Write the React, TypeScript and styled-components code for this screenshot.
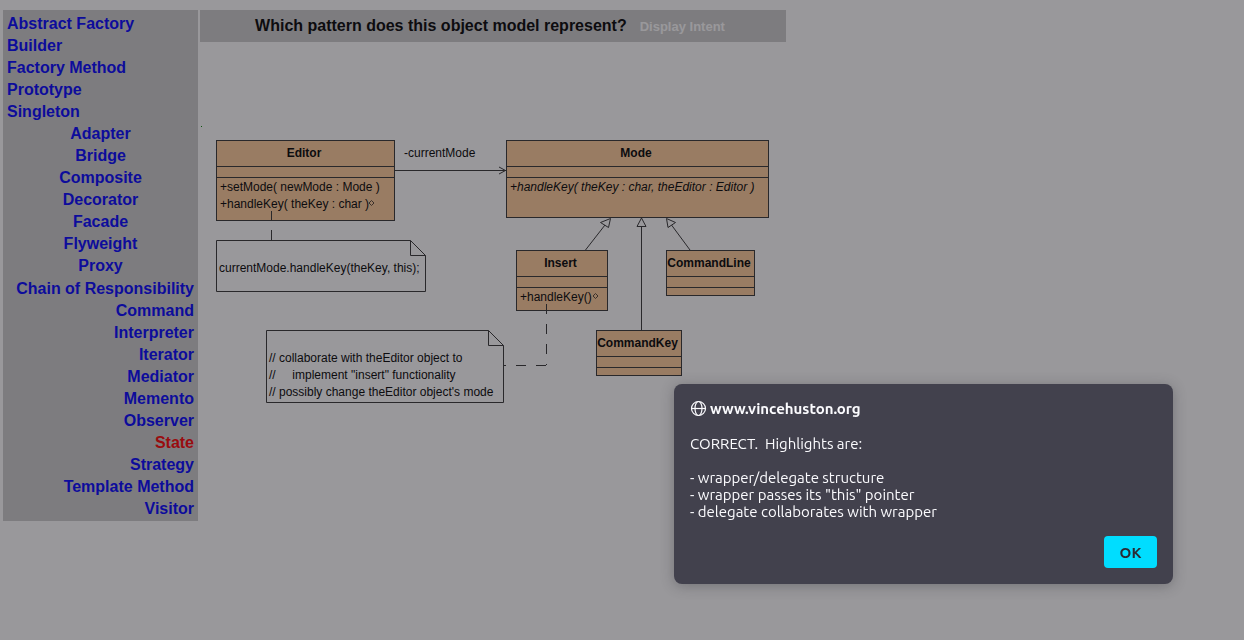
import React from 'react';
import styled, { createGlobalStyle, css } from 'styled-components';

const GlobalStyle = createGlobalStyle`
  *, *::before, *::after { box-sizing: border-box; }
  body {
    margin: 0;
    background: #fff;
    color: #000;
    font-family: "Liberation Sans", Arial, sans-serif;
    font-size: 16px;
  }
`;

type Align = 'left' | 'center' | 'right';

const Page = styled.div`
  display: flex;
  align-items: flex-start;
  gap: 2px;
  min-height: 100vh;
  padding: 10px 3px;
`;

const Sidebar = styled.nav`
  flex: none;
  width: 195px;
  padding: 3px 4px 1px;
  background: #ccc;
`;

const PatternGroup = styled.ul<{ $align: Align }>`
  margin: 0;
  padding: ${({ $align }) => ($align === 'right' ? '1px 0 0' : '0')};
  list-style: none;
  text-align: ${({ $align }) => $align};
`;

const PatternItem = styled.li`
  line-height: 22px;
`;

const PatternLink = styled.a<{ $chosen: boolean }>`
  color: ${({ $chosen }) => ($chosen ? '#f00' : '#00f')};
  font-weight: bold;
  text-decoration: none;
  white-space: nowrap;
`;

const Main = styled.main`
  flex: 1;
  min-width: 0;
  max-width: 586px;
`;

const Question = styled.header`
  display: flex;
  align-items: baseline;
  justify-content: center;
  gap: 13px;
  padding: 5px 6px 5px 0;
  background: #ccc;
`;

const QuestionText = styled.h1`
  margin: 0;
  font-size: 16px;
  line-height: 22px;
  white-space: nowrap;
`;

const IntentButton = styled.button`
  padding: 0;
  border: 0;
  background: none;
  color: #fff;
  font: bold 13px "Liberation Sans", Arial, sans-serif;
  white-space: nowrap;
`;

/* Free canvas: every node carries its own place in the diagram. */
const Canvas = styled.section`
  position: relative;
  height: 300px;
  margin-top: 78px;
  font-size: 12px;
  line-height: 17px;
`;

const placed = css<{ $x: number; $y: number; $w: number; $h: number }>`
  position: absolute;
  left: ${({ $x }) => $x}px;
  top: ${({ $y }) => $y}px;
  width: ${({ $w }) => $w}px;
  height: ${({ $h }) => $h}px;
`;

const ClassBox = styled.article`
  ${placed}
  border: 1px solid #333;
  background: #fc9;
`;

const ClassName = styled.h2`
  height: 26px;
  margin: 0;
  padding: 4px 3px 0 0;
  border-bottom: 1px solid #333;
  font-size: 12px;
  line-height: 17px;
  text-align: center;
`;

const Attributes = styled.div`
  height: 11px;
  margin-bottom: 1px;
  border-bottom: 1px solid #333;
`;

const Operation = styled.div<{ $abstract?: boolean }>`
  padding-left: 3px;
  font-style: ${({ $abstract }) => ($abstract ? 'italic' : 'normal')};
  white-space: nowrap;
`;

const Note = styled.p`
  ${placed}
  margin: 0;
  padding: 20px 0 0 3px;
  white-space: pre;
`;

const RoleLabel = styled.span`
  position: absolute;
  left: 204px;
  top: 25px;
`;

const Connectors = styled.svg`
  position: absolute;
  left: 0;
  top: 0;
  pointer-events: none;
`;

const Backdrop = styled.div`
  position: fixed;
  inset: 0;
  display: flex;
  align-items: flex-end;
  justify-content: flex-end;
  padding: 0 71px 56px 16px;
  background: rgba(28, 27, 34, 0.45);
`;

const Alert = styled.section`
  display: flex;
  flex-direction: column;
  width: 499px;
  padding: 16px;
  border-radius: 8px;
  background: #42414d;
  box-shadow: 0 2px 14px rgba(28, 27, 34, 0.3);
  color: #fbfbfe;
  font-family: Ubuntu, "Noto Sans", sans-serif;
  font-size: 15px;
`;

const AlertTitle = styled.h2`
  display: flex;
  align-items: center;
  gap: 3px;
  margin: 0 0 18px;
  font-size: 15px;
  line-height: 17px;
`;

const AlertText = styled.p`
  margin: 0 0 16px;
  line-height: 17px;
  white-space: pre-wrap;
`;

const OkButton = styled.button`
  align-self: flex-end;
  width: 53px;
  height: 32px;
  padding: 0;
  border: 0;
  border-radius: 4px;
  background: #0df;
  color: #2b2a33;
  font: bold 15px Ubuntu, "Noto Sans", sans-serif;
`;

const groups: { align: Align; names: string[] }[] = [
  { align: 'left', names: ['Abstract Factory', 'Builder', 'Factory Method', 'Prototype', 'Singleton'] },
  { align: 'center', names: ['Adapter', 'Bridge', 'Composite', 'Decorator', 'Facade', 'Flyweight', 'Proxy'] },
  {
    align: 'right',
    names: [
      'Chain of Responsibility', 'Command', 'Interpreter', 'Iterator', 'Mediator', 'Memento',
      'Observer', 'State', 'Strategy', 'Template Method', 'Visitor',
    ],
  },
];

interface ClassNode {
  name: string;
  x: number;
  y: number;
  w: number;
  h: number;
  operations: string[];
  abstract?: boolean;
}

const classes: ClassNode[] = [
  { name: 'Editor', x: 16, y: 20, w: 179, h: 81, operations: ['+setMode( newMode : Mode )', '+handleKey( theKey : char )'] },
  { name: 'Mode', x: 306, y: 20, w: 263, h: 78, operations: ['+handleKey( theKey : char, theEditor : Editor )'], abstract: true },
  { name: 'Insert', x: 316, y: 130, w: 92, h: 61, operations: ['+handleKey()'] },
  { name: 'CommandLine', x: 466, y: 130, w: 89, h: 46, operations: [] },
  { name: 'CommandKey', x: 396, y: 210, w: 86, h: 46, operations: [] },
];

const notes = [
  { x: 16, y: 120, w: 210, h: 52, text: 'currentMode.handleKey(theKey, this);' },
  {
    x: 66, y: 210, w: 238, h: 73,
    text: '// collaborate with theEditor object to\n//     implement "insert" functionality\n// possibly change theEditor object\'s mode',
  },
];

const message = `CORRECT.  Highlights are:

- wrapper/delegate structure
- wrapper passes its "this" pointer
- delegate collaborates with wrapper
`;

function Diagram() {
  return (
    <Canvas aria-label="Object model">
      {classes.map((c) => (
        <ClassBox key={c.name} $x={c.x} $y={c.y} $w={c.w} $h={c.h}>
          <ClassName>{c.name}</ClassName>
          <Attributes />
          {c.operations.map((op) => (
            <Operation key={op} $abstract={c.abstract}>{op}</Operation>
          ))}
        </ClassBox>
      ))}
      {notes.map((n) => (
        <Note key={n.text} $x={n.x} $y={n.y} $w={n.w} $h={n.h}>{n.text}</Note>
      ))}
      <RoleLabel>-currentMode</RoleLabel>
      <Connectors width="586" height="300" fill="none" stroke="#333" aria-hidden="true">
        {notes.map((n) => {
          const r = n.x + n.w - 0.5;
          const t = n.y + 0.5;
          return (
            <path
              key={n.text}
              d={`M${r - 15} ${t}H${n.x + 0.5}V${n.y + n.h - 0.5}H${r}V${t + 15}L${r - 15} ${t}V${t + 15}H${r}`}
            />
          );
        })}
        {/* association */}
        <path d="M195 50.5H306M299 47L305.500 50.500L299 54" />
        {/* generalizations */}
        <path d="M410.500 98.500L400.500 102.500L408.500 107.500ZM405 105L385.500 130" />
        <path d="M441.500 98L437 106.500H446ZM441.500 107V210" />
        <path d="M466.500 98.500L475.500 102.500L468 107.500ZM471.500 105L490 130" />
        {/* anchors of the notes */}
        <path d="M71.500 91V101M71.500 110V120" />
        <path d="M346.500 184V194M346.500 204V214M346.500 224V234M346.500 244V245M346 245.500H336M326 245.500H316M306 245.500H304" />
        <path d="M171.500 80.500L174 83L171.500 85.500L169 83Z" stroke="#543" />
        <path d="M395.500 173.500L398 176L395.500 178.500L393 176Z" stroke="#543" />
        <rect x="1" y="6" width="1" height="1" fill="#080" stroke="none" />
      </Connectors>
    </Canvas>
  );
}

function GlobeIcon() {
  return (
    <svg width="17" height="17" viewBox="0 0 17 17" fill="none" stroke="currentColor" strokeWidth="1.2" aria-hidden="true">
      <circle cx="8.500" cy="8.500" r="7" />
      <ellipse cx="8.500" cy="8.500" rx="3.500" ry="7" />
      <path d="M1.500 8.500H15.500" />
    </svg>
  );
}

export default function App() {
  return (
    <>
      <GlobalStyle />
      <Page>
        <Sidebar aria-label="Patterns">
          {groups.map((g) => (
            <PatternGroup key={g.align} $align={g.align}>
              {g.names.map((name) => (
                <PatternItem key={name}>
                  <PatternLink href="#" $chosen={name === 'State'}>{name}</PatternLink>
                </PatternItem>
              ))}
            </PatternGroup>
          ))}
        </Sidebar>
        <Main>
          <Question>
            <QuestionText>Which pattern does this object model represent?</QuestionText>
            <IntentButton type="button">Display Intent</IntentButton>
          </Question>
          <Diagram />
        </Main>
      </Page>
      <Backdrop>
        <Alert role="alertdialog" aria-modal="true" aria-labelledby="alert-title" aria-describedby="alert-text">
          <AlertTitle id="alert-title">
            <GlobeIcon />
            www.vincehuston.org
          </AlertTitle>
          <AlertText id="alert-text">{message}</AlertText>
          <OkButton type="button">OK</OkButton>
        </Alert>
      </Backdrop>
    </>
  );
}
